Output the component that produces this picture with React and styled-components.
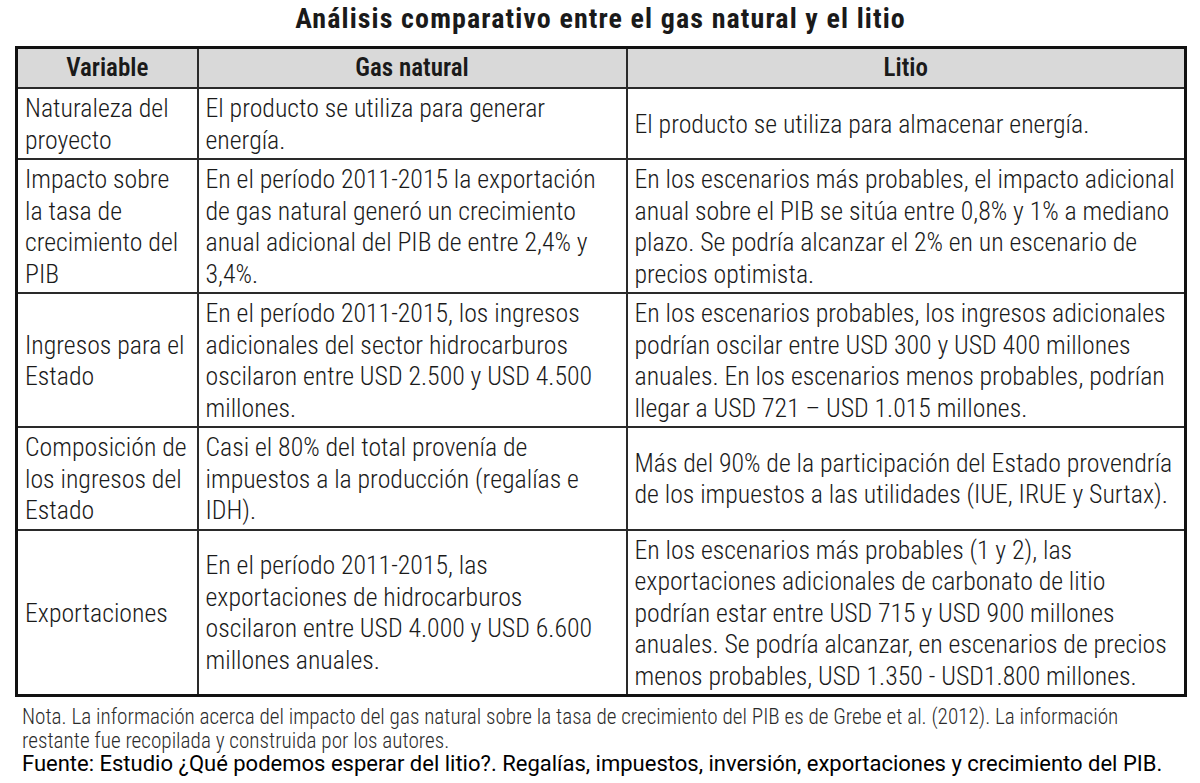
import React from "react";
import styled, { createGlobalStyle } from "styled-components";

const GlobalStyle = createGlobalStyle`
  html, body {
    margin: 0;
    padding: 0;
    background: #ffffff;
  }
  body {
    font-family: "Roboto Condensed", "Roboto", "DejaVu Sans Condensed", sans-serif;
    color: #1e1e1e;
  }
`;

const Page = styled.div`
  width: 1200px;
  height: 783px;
  padding: 0 0 0 15px;
  box-sizing: border-box;
  overflow: hidden;
`;

const Title = styled.h1`
  width: 1171px;
  margin: 0;
  height: 46px;
  display: flex;
  align-items: center;
  justify-content: center;
  padding-bottom: 10px;
  box-sizing: border-box;
  font-family: "Roboto Condensed", "Roboto", sans-serif;
  font-weight: 700;
  font-size: 28px;
  letter-spacing: 1.1px;
  color: #1a1a1a;
`;

const Table = styled.table`
  width: 1169px;
  table-layout: fixed;
  border-collapse: collapse;
  border: 3px solid #111111;
`;

const HeadCell = styled.th`
  height: 34px;
  padding: 2px 7px;
  background: #d9d9d9;
  border: 2px solid #2a2a2a;
  font-weight: 600;
  font-size: 25px;
  line-height: 32px;
  text-align: center;
  color: #1a1a1a;
`;

const Cell = styled.td`
  padding: 4px 7px 2px 7px;
  border: 2px solid #2a2a2a;
  vertical-align: middle;
  text-align: left;
  font-weight: 300;
  font-size: 25.8px;
  line-height: 31.5px;
  white-space: nowrap;
  color: #1a1a1a;
`;

const Notes = styled.div`
  width: 1169px;
  padding: 8px 0 0 7px;
  box-sizing: border-box;
`;

const Note = styled.p`
  margin: 0;
  font-family: "Roboto Condensed", "Roboto", sans-serif;
  font-weight: 300;
  font-size: 21.2px;
  line-height: 24px;
  color: #2b2b2b;
`;

const Source = styled.p`
  margin: 0;
  font-family: "Roboto", sans-serif;
  font-weight: 400;
  font-size: 22px;
  line-height: 22px;
  color: #000000;
`;

const rows = [
  {
    variable: ["Naturaleza del", "proyecto"],
    gas: ["El producto se utiliza para generar", "energía."],
    litio: ["El producto se utiliza para almacenar energía."],
  },
  {
    variable: ["Impacto sobre", "la tasa de", "crecimiento del", "PIB"],
    gas: [
      "En el período 2011-2015 la exportación",
      "de gas natural generó un crecimiento",
      "anual adicional del PIB de entre 2,4% y",
      "3,4%.",
    ],
    litio: [
      "En los escenarios más probables, el impacto adicional",
      "anual sobre el PIB se sitúa entre 0,8% y 1% a mediano",
      "plazo. Se podría alcanzar el 2% en un escenario de",
      "precios optimista.",
    ],
  },
  {
    variable: ["Ingresos para el", "Estado"],
    gas: [
      "En el período 2011-2015, los ingresos",
      "adicionales del sector hidrocarburos",
      "oscilaron entre USD 2.500 y USD 4.500",
      "millones.",
    ],
    litio: [
      "En los escenarios probables, los ingresos adicionales",
      "podrían oscilar entre USD 300 y USD 400 millones",
      "anuales. En los escenarios menos probables, podrían",
      "llegar a USD 721 – USD 1.015 millones.",
    ],
  },
  {
    variable: ["Composición de", "los ingresos del", "Estado"],
    gas: [
      "Casi el 80% del total provenía de",
      "impuestos a la producción (regalías e",
      "IDH).",
    ],
    litio: [
      "Más del 90% de la participación del Estado provendría",
      "de los impuestos a las utilidades (IUE, IRUE y Surtax).",
    ],
  },
  {
    variable: ["Exportaciones"],
    gas: [
      "En el período 2011-2015, las",
      "exportaciones de hidrocarburos",
      "oscilaron entre USD 4.000 y USD 6.600",
      "millones anuales.",
    ],
    litio: [
      "En los escenarios más probables (1 y 2), las",
      "exportaciones adicionales de carbonato de litio",
      "podrían estar entre USD 715 y USD 900 millones",
      "anuales. Se podría alcanzar, en escenarios de precios",
      "menos probables, USD 1.350 - USD1.800 millones.",
    ],
  },
];

function Lines({ lines }) {
  return lines.map((line, index) => (
    <React.Fragment key={index}>
      {index > 0 && <br />}
      {line}
    </React.Fragment>
  ));
}

export default function App() {
  return (
    <Page>
      <GlobalStyle />
      <Title>Análisis comparativo entre el gas natural y el litio</Title>
      <Table>
        <colgroup>
          <col style={{ width: 181 }} />
          <col style={{ width: 429 }} />
          <col style={{ width: 559 }} />
        </colgroup>
        <thead>
          <tr>
            <HeadCell>Variable</HeadCell>
            <HeadCell>Gas natural</HeadCell>
            <HeadCell>Litio</HeadCell>
          </tr>
        </thead>
        <tbody>
          {rows.map((row, index) => (
            <tr key={index}>
              <Cell>
                <Lines lines={row.variable} />
              </Cell>
              <Cell>
                <Lines lines={row.gas} />
              </Cell>
              <Cell>
                <Lines lines={row.litio} />
              </Cell>
            </tr>
          ))}
        </tbody>
      </Table>
      <Notes>
        <Note>
          Nota. La información acerca del impacto del gas natural sobre la tasa de
          crecimiento del PIB es de Grebe et al. (2012). La información
          <br />
          restante fue recopilada y construida por los autores.
        </Note>
        <Source>
          Fuente: Estudio ¿Qué podemos esperar del litio?. Regalías, impuestos,
          inversión, exportaciones y crecimiento del PIB.
        </Source>
      </Notes>
    </Page>
  );
}
